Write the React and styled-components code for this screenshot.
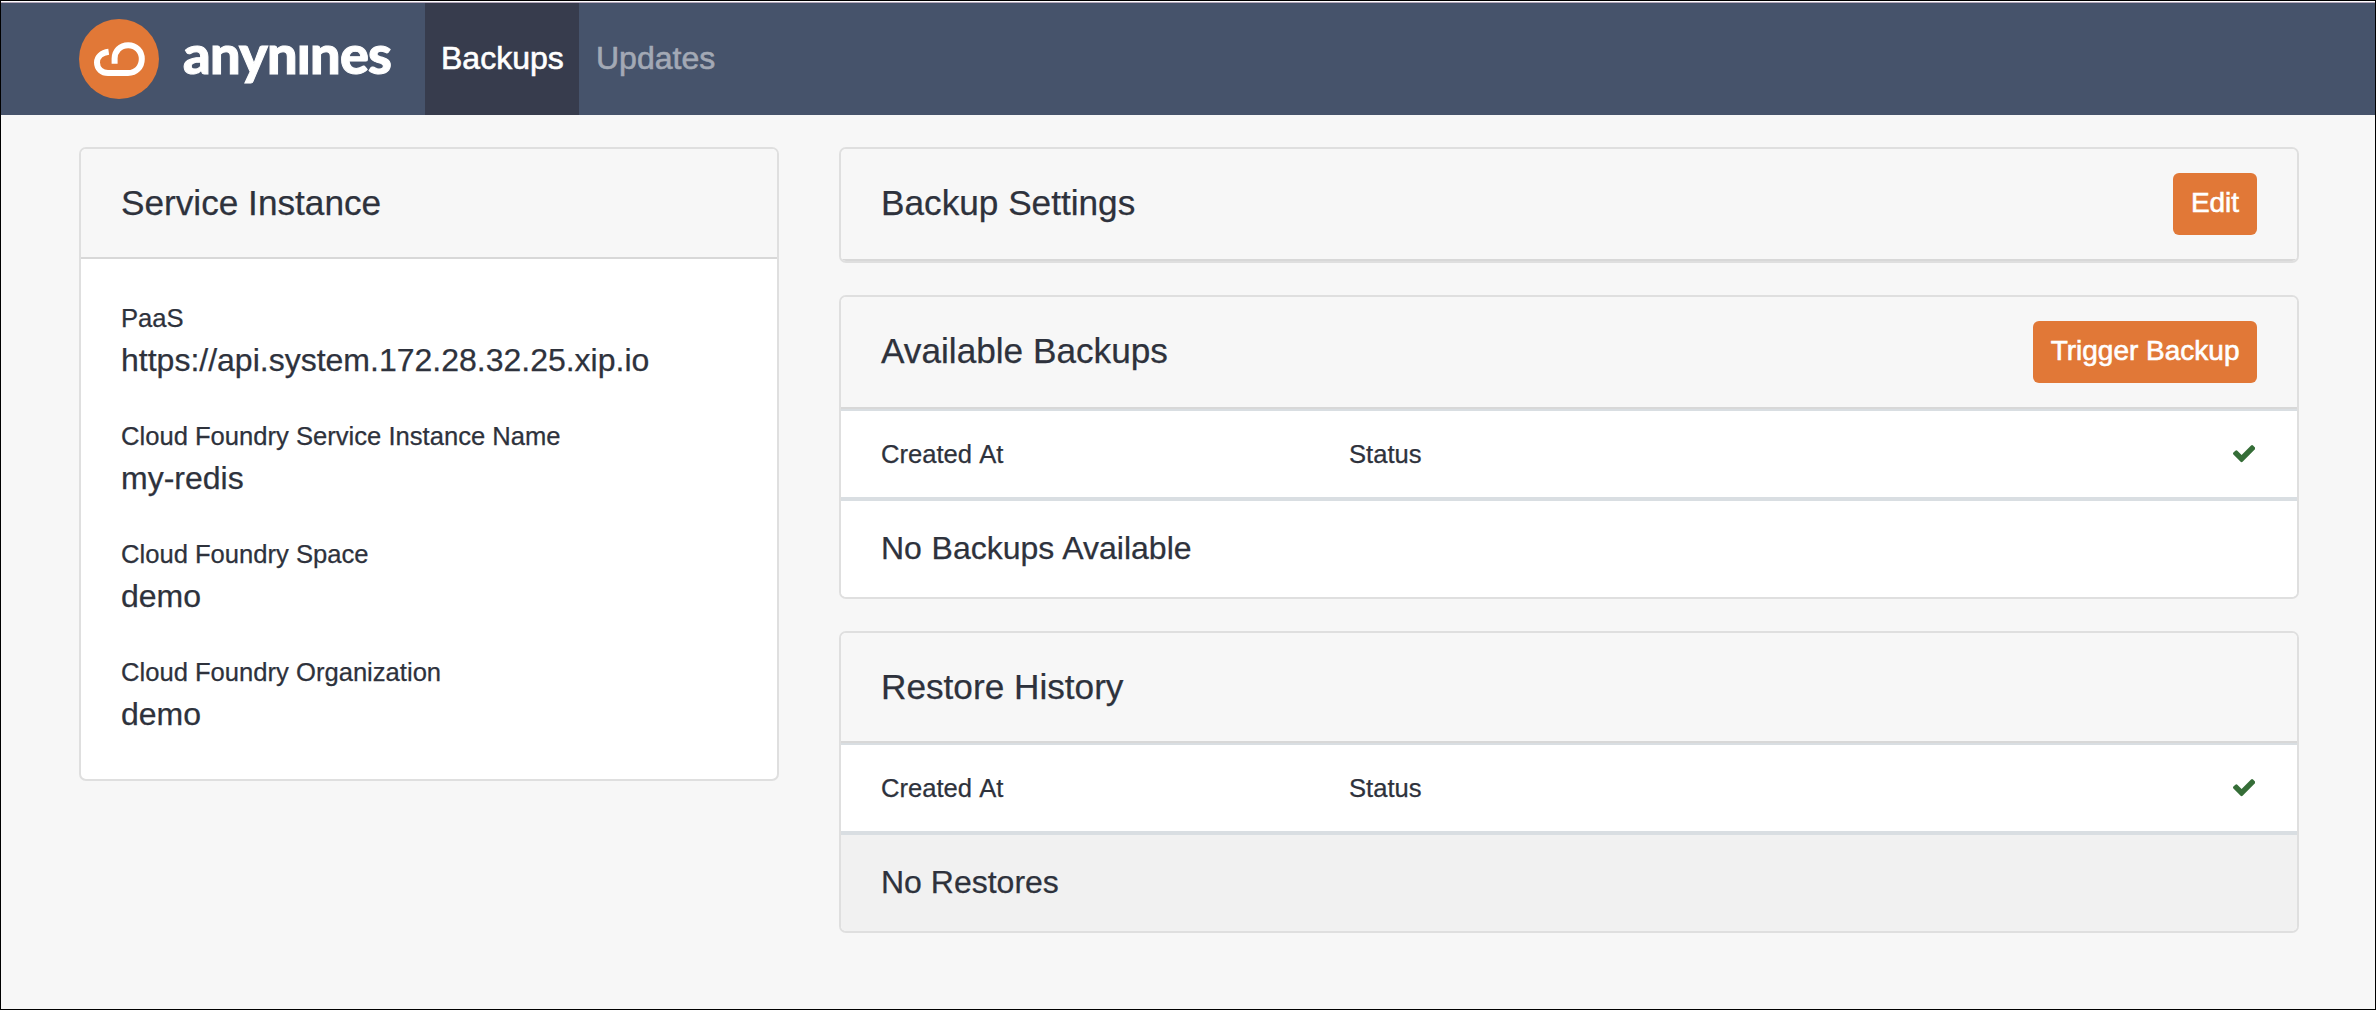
import React from "react";
import styled, { createGlobalStyle } from "styled-components";

const Global = createGlobalStyle`
  * { box-sizing: border-box; }
  body { margin: 0; background: #f7f7f7; font-family: "Liberation Sans", Arial, sans-serif; color: #2e323c; }
`;

const Page = styled.div`
  height: 1010px;
  border: 1px solid #000;
  background: #f7f7f7;
  overflow: hidden;
  -webkit-text-stroke: 0.25px currentColor;
`;

const Navbar = styled.header`
  height: 114px;
  display: flex;
  padding-left: 78px;
  background: #46536b;
  border-top: 1px solid #fff;
  box-shadow: inset 0 1px 0 #b3a7bb;
`;

const Brand = styled.a`
  width: 346px;
  padding-top: 17px;
  svg { display: block; }
`;

const NavLink = styled.a`
  margin-top: 1px;
  height: 112px;
  padding: 0 16px ${(p) => (p.$active ? "" : "0 17px")};
  width: ${(p) => (p.$active ? "154px" : "auto")};
  font-size: 32px;
  line-height: 110px;
  -webkit-text-stroke-width: 0.6px;
  color: ${(p) => (p.$active ? "#fff" : "#a3a9b5")};
  background: ${(p) => (p.$active ? "#373c4d" : "transparent")};
`;

const Main = styled.main`
  display: grid;
  grid-template-columns: 700px 1460px;
  column-gap: 60px;
  padding: 32px 0 0 78px;
  align-items: start;
`;

const Column = styled.div`
  display: flex;
  flex-direction: column;
  gap: 32px;
`;

const Card = styled.section`
  border: 2px solid #dfdfdf;
  border-radius: 7px;
  background: #fff;
  overflow: hidden;
`;

const CardHeader = styled.div`
  height: ${(p) => p.$height}px;
  display: flex;
  justify-content: space-between;
  align-items: flex-start;
  padding: 24px 40px 0;
  background: #f7f7f7;
  border-bottom: 2px solid #d8d8d8;
`;

const Title = styled.h2`
  margin: 0;
  font-size: 35.2px;
  font-weight: 400;
  line-height: 60px;
`;

const Button = styled.button`
  height: 62px;
  min-width: 84px;
  padding: 0 17.5px 2px;
  border: 0;
  border-radius: 6px;
  background: #e17837;
  color: #fff;
  font: 28px "Liberation Sans", Arial, sans-serif;
  -webkit-text-stroke: 0.6px currentColor;
`;

const Details = styled.dl`
  margin: 0;
  height: 520px;
  padding: 39px 40px 0;
`;

const Label = styled.dt`
  font-size: 25.6px;
  line-height: 40px;
`;

const Value = styled.dd`
  margin: 0 0 34px;
  font-size: 32px;
  line-height: 44px;
`;

const HeadRow = styled.div`
  height: 92px;
  display: grid;
  grid-template-columns: 468px 1fr auto;
  padding: 0 40px;
  border-top: 2px solid #d9dee2;
  border-bottom: 4px solid #d9dee2;
  font-size: 25.6px;
  line-height: 86px;
  word-spacing: 1.4px;
`;

const Check = styled.svg`
  align-self: center;
  width: 22.4px;
  height: 17.2px;
  margin-right: 1.6px;
  fill: #356d37;
`;

const EmptyRow = styled.div`
  height: 96px;
  padding: 0 40px;
  font-size: 32px;
  line-height: 94px;
  word-spacing: ${(p) => (p.$shaded ? "0" : "0.8px")};
  background: ${(p) => (p.$shaded ? "#f1f1f1" : "#fff")};
`;

const details = [
  ["PaaS", "https://api.system.172.28.32.25.xip.io"],
  ["Cloud Foundry Service Instance Name", "my-redis"],
  ["Cloud Foundry Space", "demo"],
  ["Cloud Foundry Organization", "demo"],
];

function Logo() {
  return (
    <svg width="320" height="84" viewBox="0 0 320 84">
      <circle cx="40" cy="40" r="40" fill="#e17837" />
      <path
        d="M29.700 32.800 C22.500 33.800 18 38 18 43.500 C18 50 23 54 29 54 H49 C57 54 62.800 48 62.800 40 C62.800 32 57 26.200 49.200 26.200 C41 26.200 35.600 32 35.600 39.500 V44.700"
        fill="none" stroke="#fff" strokeWidth="6"
      />
      <text x="104" y="54.500" fill="#fff" stroke="#fff" strokeWidth="1" fontFamily="Lato, sans-serif" fontWeight="900" fontSize="54" textLength="209">anynınes</text>
    </svg>
  );
}

function TableHead() {
  return (
    <HeadRow>
      <span>Created At</span>
      <span>Status</span>
      <Check viewBox="121 334 1550 1188">
        <path d="M1671 566q0 40-28 68l-724 724-136 136q-28 28-68 28t-68-28l-136-136-362-362q-28-28-28-68t28-68l136-136q28-28 68-28t68 28l294 295 656-657q28-28 68-28t68 28l136 136q28 28 28 68z" />
      </Check>
    </HeadRow>
  );
}

export default function App() {
  return (
    <Page>
      <Global />
      <Navbar>
        <Brand><Logo /></Brand>
        <NavLink $active>Backups</NavLink>
        <NavLink>Updates</NavLink>
      </Navbar>
      <Main>
        <Card>
          <CardHeader $height={110}><Title>Service Instance</Title></CardHeader>
          <Details>
            {details.map(([label, value]) => (
              <React.Fragment key={label}>
                <Label>{label}</Label>
                <Value>{value}</Value>
              </React.Fragment>
            ))}
          </Details>
        </Card>
        <Column>
          <Card>
            <CardHeader $height={112}><Title>Backup Settings</Title><Button>Edit</Button></CardHeader>
          </Card>
          <Card>
            <CardHeader $height={112}><Title>Available Backups</Title><Button>Trigger Backup</Button></CardHeader>
            <TableHead />
            <EmptyRow>No Backups Available</EmptyRow>
          </Card>
          <Card>
            <CardHeader $height={110}><Title>Restore History</Title></CardHeader>
            <TableHead />
            <EmptyRow $shaded>No Restores</EmptyRow>
          </Card>
        </Column>
      </Main>
    </Page>
  );
}
